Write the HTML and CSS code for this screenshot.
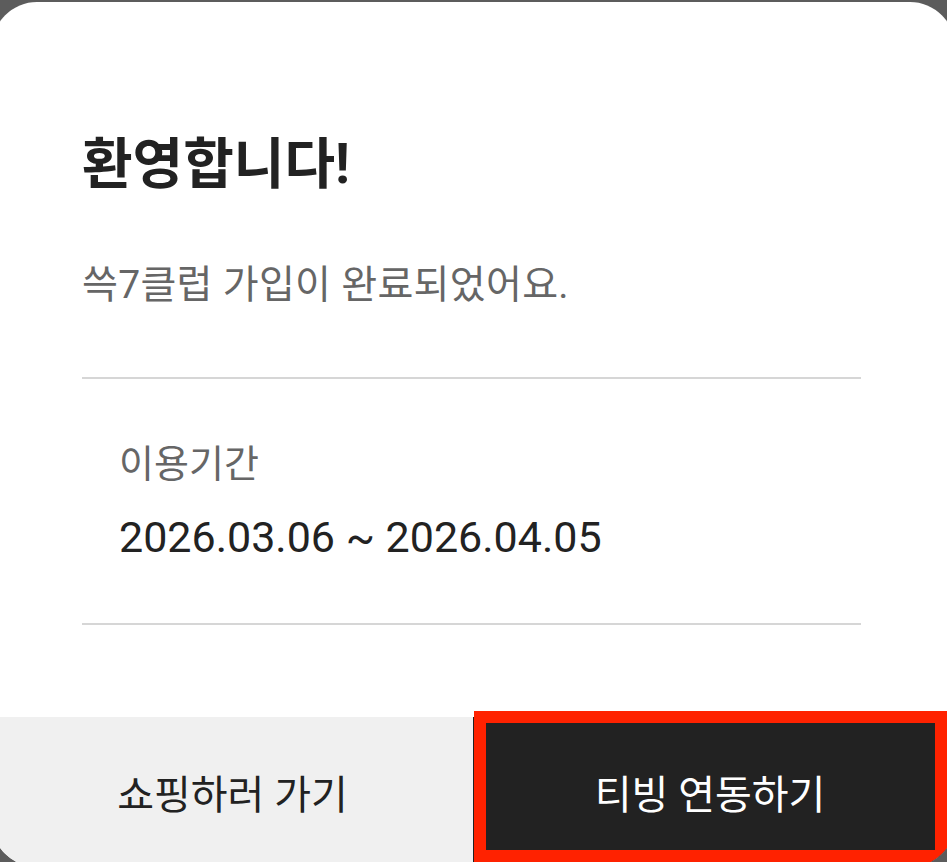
FILE: index.html
```html
<!DOCTYPE html>
<html lang="ko">
<head>
<meta charset="utf-8">
<title>환영합니다</title>
<link rel="stylesheet" href="styles.css">
</head>
<body>
<div class="sheet">
  <div class="content">
    <h1 class="title">환영합니다!</h1>
    <p class="subtitle">쓱7클럽 가입이 완료되었어요.</p>
    <div class="period">
      <div class="period-label">이용기간</div>
      <div class="period-value">2026.03.06 ~ 2026.04.05</div>
    </div>
  </div>
  <div class="actions">
    <button class="btn btn-light">쇼핑하러 가기</button>
    <button class="btn btn-dark">티빙 연동하기</button>
    <div class="highlight"></div>
  </div>
</div>
</body>
</html>
```

FILE: styles.css
```css
html, body {
  margin: 0;
  padding: 0;
  height: 862px;
  overflow: hidden;
  background: #5c5c5c;
}

body {
  font-family: Roboto, "Noto Sans CJK KR", sans-serif;
  color: #222222;
}

.sheet {
  margin: 2px -8px 0;
  height: 865px;
  background: #ffffff;
  border-radius: 45px;
  overflow: hidden;
  display: flex;
  flex-direction: column;
}

.content {
  flex: 1;
  padding: 0 94px 0 90px;
}

.title {
  margin: 130px 0 0;
  font-size: 55px;
  line-height: 64px;
  font-weight: 700;
  letter-spacing: 0;
  color: #222222;
}

.subtitle {
  margin: 66px 0 0;
  font-size: 39px;
  line-height: 46px;
  letter-spacing: 0.3px;
  color: #666666;
}

.period {
  margin-top: 69px;
  border-top: 2px solid #d6d6d6;
  border-bottom: 2px solid #d6d6d6;
  padding: 63px 0 61px 37px;
}

.period-label {
  font-size: 38px;
  line-height: 44px;
  letter-spacing: 0;
  color: #666666;
}

.period-value {
  margin-top: 26px;
  font-size: 43px;
  line-height: 50px;
  color: #222222;
}

.actions {
  position: relative;
  display: flex;
  height: 150px;
}

.btn {
  border: 0;
  margin: 0;
  font-family: Roboto, "Noto Sans CJK KR", sans-serif;
  font-size: 40px;
  letter-spacing: 0;
  padding: 0;
  box-sizing: border-box;
}

.btn-light {
  flex: 0 0 481px;
  background: #f0f0f0;
  color: #222222;
}

.btn-dark {
  flex: 1;
  background: #222222;
  color: #ffffff;
  padding-right: 8px;
}

.highlight {
  position: absolute;
  top: -6px;
  right: 8px;
  bottom: 5px;
  width: 473px;
  box-sizing: border-box;
  border: 12px solid #ff2200;
}
```
